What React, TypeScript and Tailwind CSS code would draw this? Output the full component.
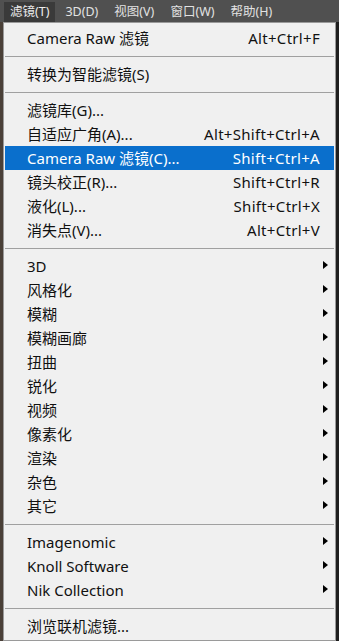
import React from "react"

type Item =
  | { kind: "sep" }
  | { kind: "item"; label: string; shortcut?: string; sub?: boolean; active?: boolean }

const items: Item[] = [
  { kind: "item", label: "Camera Raw 滤镜", shortcut: "Alt+Ctrl+F" },
  { kind: "sep" },
  { kind: "item", label: "转换为智能滤镜(S)" },
  { kind: "sep" },
  { kind: "item", label: "滤镜库(G)..." },
  { kind: "item", label: "自适应广角(A)...", shortcut: "Alt+Shift+Ctrl+A" },
  { kind: "item", label: "Camera Raw 滤镜(C)...", shortcut: "Shift+Ctrl+A", active: true },
  { kind: "item", label: "镜头校正(R)...", shortcut: "Shift+Ctrl+R" },
  { kind: "item", label: "液化(L)...", shortcut: "Shift+Ctrl+X" },
  { kind: "item", label: "消失点(V)...", shortcut: "Alt+Ctrl+V" },
  { kind: "sep" },
  { kind: "item", label: "3D", sub: true },
  { kind: "item", label: "风格化", sub: true },
  { kind: "item", label: "模糊", sub: true },
  { kind: "item", label: "模糊画廊", sub: true },
  { kind: "item", label: "扭曲", sub: true },
  { kind: "item", label: "锐化", sub: true },
  { kind: "item", label: "视频", sub: true },
  { kind: "item", label: "像素化", sub: true },
  { kind: "item", label: "渲染", sub: true },
  { kind: "item", label: "杂色", sub: true },
  { kind: "item", label: "其它", sub: true },
  { kind: "sep" },
  { kind: "item", label: "Imagenomic", sub: true },
  { kind: "item", label: "Knoll Software", sub: true },
  { kind: "item", label: "Nik Collection", sub: true },
  { kind: "sep" },
  { kind: "item", label: "浏览联机滤镜..." },
]

const menus = ["滤镜(T)", "3D(D)", "视图(V)", "窗口(W)", "帮助(H)"]

const Arrow: React.FC = () => (
  <svg width="5" height="8" viewBox="0 0 5 8" className="mb-[3px]">
    <polygon points="0,0 5,4 0,8" fill="#000" />
  </svg>
)

const App: React.FC = () => {
  return (
    <div className="w-[339px] h-[641px] overflow-hidden bg-[#2b2b2b] flex flex-col font-['Noto_Sans','Noto_Sans_CJK_SC',sans-serif]">
      {/* menu bar */}
      <div className="h-[22px] bg-[#505050] flex items-end pl-[4px] gap-[4px] text-[12.5px] text-[#e2e2e2]">
        {menus.map((m, i) => (
          <div
            key={m}
            className={
              "h-[20px] px-[6px] flex items-center leading-none " +
              (i === 0 ? "bg-[#3a3a3a] text-[#ececec]" : "")
            }
          >
            {m}
          </div>
        ))}
      </div>

      <div className="flex flex-1">
        <div className="w-[3px] bg-[#4a4038]" />
        <div className="flex-1 bg-[#f0f0f0] border border-[#9a9a9a] pt-[3px] text-[15px] text-[#111]">
          {items.map((it, i) =>
            it.kind === "sep" ? (
              <div key={i} className="h-[12px] flex items-center mx-px">
                <div className="h-px w-full bg-[#a0a0a0]" />
              </div>
            ) : (
              <div
                key={i}
                className={
                  "h-[24px] mx-px pl-[22px] flex items-center justify-between leading-none " +
                  (it.sub ? "pr-[6px] " : "pr-[14px] ") +
                  (it.active ? "bg-[#0a6fcc] text-white" : "")
                }
              >
                <span>{it.label}</span>
                {it.shortcut && <span className="tracking-[0.3px]">{it.shortcut}</span>}
                {it.sub && <Arrow />}
              </div>
            )
          )}
        </div>
        <div className="w-[3px] bg-[#1e1e1e]" />
      </div>
    </div>
  )
}

export default App
